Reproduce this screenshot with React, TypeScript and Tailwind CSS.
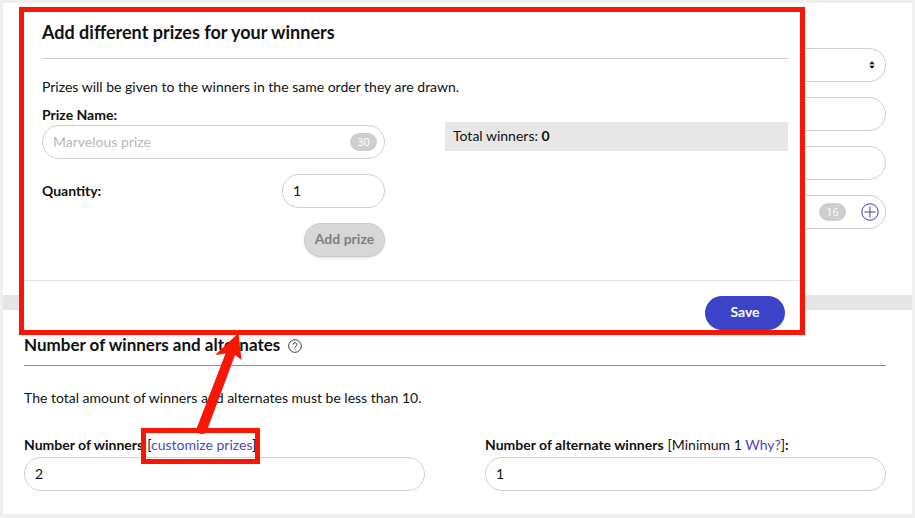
import type { InputHTMLAttributes, ReactNode } from "react";

const field =
  "block h-[34px] w-full rounded-full border border-[#cfcfcf] bg-white px-[10px] pb-[2px] text-sm text-[#111] outline-none placeholder:text-[#b9b9b9] focus:border-[#3a43c9]";

function TextField(props: InputHTMLAttributes<HTMLInputElement>) {
  return <input type="text" className={field} {...props} />;
}

function Counter({ children }: { children: ReactNode }) {
  return (
    <span className="flex h-[18px] w-[27px] items-center justify-center rounded-full bg-[#cecece] pt-px font-['Open_Sans',sans-serif] text-[11px] text-white">
      {children}
    </span>
  );
}

function Details() {
  return (
    <section className="grid grid-cols-2 gap-x-[60px] pt-[45px] pr-[26px] pb-[66px] pl-[21px]">
      <div className="col-start-2 flex flex-col gap-[15px]">
        <div className="relative">
          <select aria-label="Type" className={`${field} appearance-none`} defaultValue="">
            <option value=""></option>
          </select>
          <svg
            className="pointer-events-none absolute top-[13px] right-[11px]"
            width="6"
            height="8"
            viewBox="0 0 6 8"
            fill="#000"
          >
            <path d="M3 .3 5.700 3.300H.3ZM3 7.700 .3 4.700h5.400Z" />
          </svg>
        </div>
        <TextField aria-label="First detail" />
        <TextField aria-label="Second detail" />
        <div className="relative">
          <TextField aria-label="Third detail" />
          <div className="absolute top-2 right-[7px] flex items-center gap-[15px]">
            <Counter>16</Counter>
            <button type="button" aria-label="Add">
              <svg className="block" width="18" height="18" viewBox="0 0 18 18" fill="none" stroke="#3a3ab8">
                <circle cx="9" cy="9" r="8.2" />
                <path d="M9 3.5v11M3.5 9h11" />
              </svg>
            </button>
          </div>
        </div>
      </div>
    </section>
  );
}

function Winners() {
  return (
    <section className="pt-[25px] pr-[26px] pb-[23px] pl-[21px]">
      <div className="flex h-[31px] items-start gap-2 border-b border-[#8a8a8a]">
        <h2 className="text-[17px] leading-5 font-bold">Number of winners and alternates</h2>
        <button type="button" aria-label="Help" className="pt-1">
          <svg className="block" width="14" height="14" viewBox="0 0 13 13" fill="none" stroke="#222">
            <circle cx="6.5" cy="6.5" r="5.9" strokeWidth=".8" />
            <path d="M4.800 5.200a1.700 1.700 0 1 1 2.600 1.400c-.6.4-.9.7-.9 1.300M6.500 8.900v1" strokeWidth=".9" />
          </svg>
        </button>
      </div>
      <p className="mt-[22px] text-sm leading-5">
        The total amount of winners and alternates must be less than 10.
      </p>
      <div className="mt-7 grid grid-cols-2 gap-x-[60px]">
        <div>
          <div className="flex h-[21px] gap-1 text-sm leading-[18px]">
            <label htmlFor="winners" className="font-bold">
              Number of winners
            </label>
            <span>
              [
              <a href="#customize" className="text-[#4a48c4]">
                customize prizes
              </a>
              ]<b>:</b>
            </span>
          </div>
          <TextField id="winners" defaultValue="2" />
        </div>
        <div>
          <div className="flex h-[21px] gap-1 text-sm leading-[18px]">
            <label htmlFor="alternates" className="font-bold">
              Number of alternate winners
            </label>
            <span>
              [Minimum 1{" "}
              <a href="#why" className="text-[#4a48c4]">
                Why?
              </a>
              ]<b>:</b>
            </span>
          </div>
          <TextField id="alternates" defaultValue="1" />
        </div>
      </div>
    </section>
  );
}

function PrizeDialog() {
  return (
    <div
      role="dialog"
      aria-labelledby="prize-title"
      className="absolute top-[7px] right-[110px] left-[19px] border-[5px] border-[#fb1505] bg-white"
    >
      <div className="pr-3 pl-[18px]">
        <h2 id="prize-title" className="h-[47px] border-b border-[#cccccc] pt-[10px] text-lg leading-5 font-bold">
          Add different prizes for your winners
        </h2>
        <p className="mt-[18px] text-sm leading-5">
          Prizes will be given to the winners in the same order they are drawn.
        </p>
        <div className="mt-2 grid grid-cols-2 gap-x-[60px]">
          <div className="flex flex-col">
            <label htmlFor="prize" className="text-sm leading-5 font-bold">
              Prize Name:
            </label>
            <div className="relative">
              <TextField id="prize" placeholder="Marvelous prize" />
              <div className="absolute top-2 right-2">
                <Counter>30</Counter>
              </div>
            </div>
            <div className="mt-[15px] flex items-center justify-between">
              <label htmlFor="quantity" className="text-sm font-bold">
                Quantity:
              </label>
              <div className="w-[103px]">
                <TextField id="quantity" defaultValue="1" />
              </div>
            </div>
            <button
              type="button"
              disabled
              className="mt-[15px] h-[34px] w-[81px] self-end rounded-full border border-[#cbcbcb] bg-[#d7d7d7] pb-[2px] text-sm font-bold text-[#7f7f7f] shadow-sm"
            >
              Add prize
            </button>
          </div>
          <p className="mt-[17px] self-start bg-[#e7e7e7] px-2 pb-[2px] text-sm leading-[27px]">
            Total winners: <b>0</b>
          </p>
        </div>
      </div>
      <div className="mt-[23px] flex justify-end border-t border-[#e3e3e3] pt-[15px] pr-[15px]">
        <button type="button" className="h-[34px] w-20 rounded-full bg-[#3b43c9] pb-[2px] text-sm font-bold text-white">
          Save
        </button>
      </div>
    </div>
  );
}

function Pointer() {
  return (
    <>
      <div className="pointer-events-none absolute top-[428px] left-[141px] h-[36px] w-[119px] border-[5px] border-[#fb1505]" />
      <svg
        className="pointer-events-none absolute top-[331px] left-[190px]"
        width="60"
        height="104"
        viewBox="0 0 60 104"
        fill="#fb1505"
      >
        <path d="M48.5 2 25 24l10.500-1.500L6 99q3 6 10 3L45 24l6.500 5Z" />
      </svg>
    </>
  );
}

export default function App() {
  return (
    <main className="relative min-h-screen border-[3px] border-b-4 border-[#efefef] bg-white font-[Lato,sans-serif] text-[#111]">
      <Details />
      <div className="h-[15px] bg-[#e4e5e7]" />
      <Winners />
      <div className="absolute -inset-[3px]">
        <PrizeDialog />
        <Pointer />
      </div>
    </main>
  );
}
